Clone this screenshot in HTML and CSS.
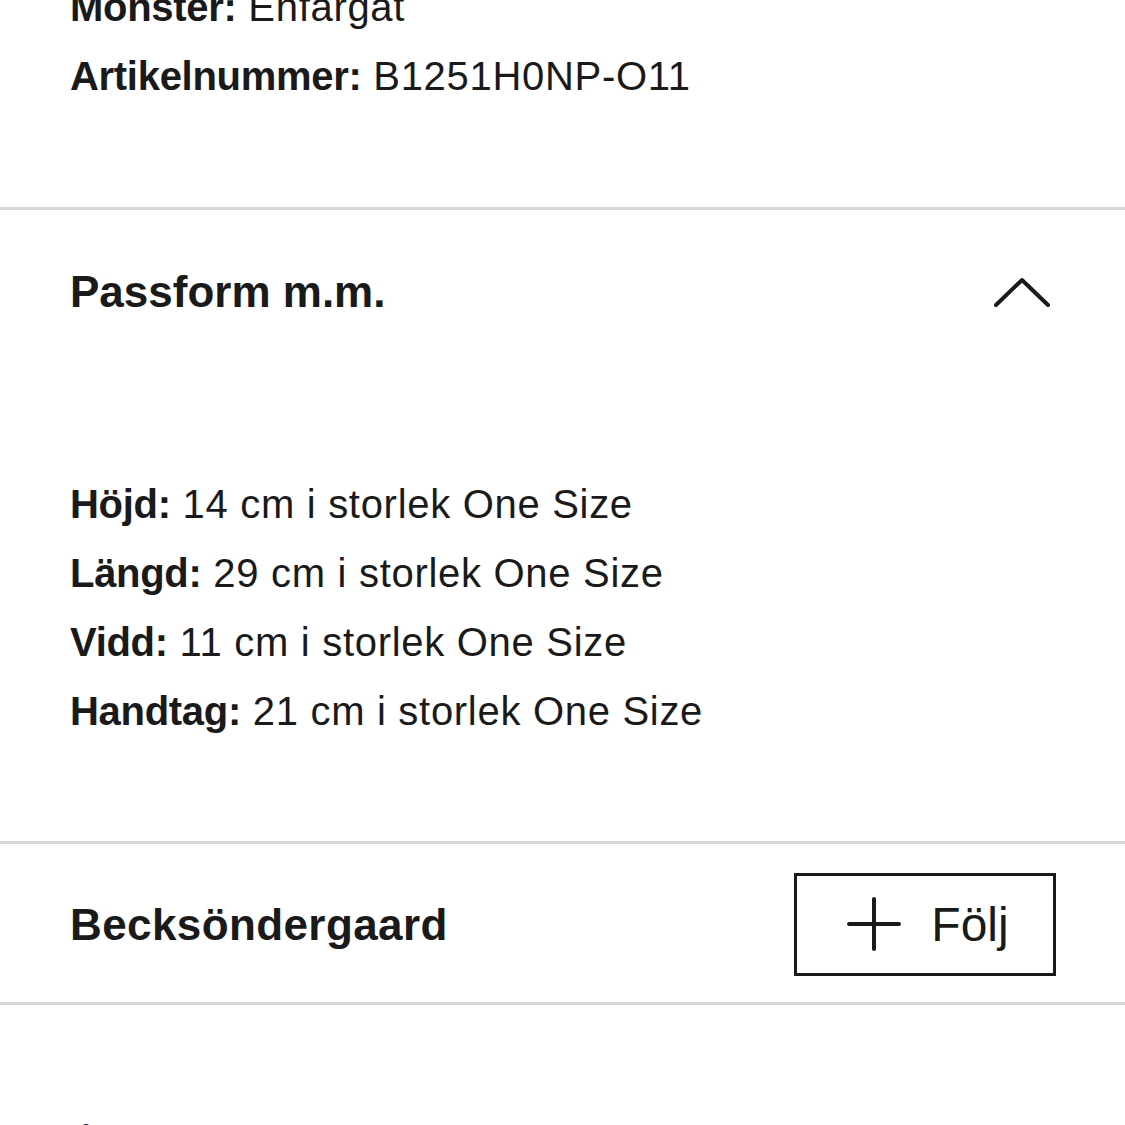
FILE: index.html
```html
<!DOCTYPE html>
<html lang="sv">
<head>
<meta charset="utf-8">
<link rel="stylesheet" href="styles.css">
</head>
<body>
<div class="page">
  <section class="attrs">
    <p class="row"><b>Mönster:</b> Enfärgat</p>
    <p class="row"><b>Artikelnummer:</b> B1251H0NP-O11</p>
  </section>
  <hr class="divider">
  <section class="acc">
    <div class="acc-head">
      <h2 class="title">Passform m.m.</h2>
      <svg class="chev" width="58" height="34" viewBox="0 0 58 34"><path d="M3 30 L29 5 L55 30" fill="none" stroke="#1a1a1a" stroke-width="4" stroke-linecap="round" stroke-linejoin="round"/></svg>
    </div>
    <div class="acc-body">
      <p class="row"><b>Höjd:</b> 14 cm i storlek One Size</p>
      <p class="row"><b>Längd:</b> 29 cm i storlek One Size</p>
      <p class="row"><b>Vidd:</b> 11 cm i storlek One Size</p>
      <p class="row"><b>Handtag:</b> 21 cm i storlek One Size</p>
    </div>
  </section>
  <hr class="divider">
  <section class="brand">
    <h2 class="title brand-name">Becksöndergaard</h2>
    <button class="follow">
      <svg width="54" height="54" viewBox="0 0 54 54"><path d="M2 27 H52 M27 2 V52" stroke="#1a1a1a" stroke-width="4" stroke-linecap="round"/></svg>
      <span>Följ</span>
    </button>
  </section>
  <hr class="divider">
  <section class="next">
    <h2 class="title">Åtgärder</h2>
  </section>
</div>
</body>
</html>
```
FILE: styles.css
```css
html, body {
  margin: 0;
  padding: 0;
  background: #fff;
}
body {
  font-family: "Liberation Sans", Arial, sans-serif;
  color: #1a1a1a;
  overflow: hidden;
  height: 1125px;
}
.page {
  width: 1125px;
}
.attrs {
  padding: 0 70px;
  margin-top: -27px;
  height: 234px;
}
.row {
  margin: 0;
  font-size: 40px;
  line-height: 69px;
  letter-spacing: 0.7px;
}
.row b {
  font-weight: 700;
  letter-spacing: -0.3px;
}
.divider {
  margin: 0;
  border: 0;
  height: 3px;
  background: #d6d6d6;
}
.acc {
  padding: 0 70px;
  height: 631px;
}
.acc-head {
  display: flex;
  justify-content: space-between;
  align-items: center;
  height: 164px;
}
.title {
  margin: 0;
  font-size: 44px;
  font-weight: 700;
}
.brand-name {
  letter-spacing: 0.4px;
}
.chev {
  margin-right: 4px;
}
.acc-body {
  padding-top: 96px;
}
.brand {
  display: flex;
  justify-content: space-between;
  align-items: center;
  padding: 0 69px 0 70px;
  height: 158px;
}
.brand .title {
  margin-top: 4px;
}
.follow {
  display: flex;
  align-items: center;
  justify-content: center;
  gap: 30px;
  width: 262px;
  height: 103px;
  border: 3px solid #1a1a1a;
  background: #fff;
  font-family: inherit;
  font-size: 48px;
  color: #1a1a1a;
  padding: 0 0 0 6px;
  margin-top: 2px;
}
.follow svg {
  display: block;
}
.next {
  padding: 118px 70px 0;
}
```
